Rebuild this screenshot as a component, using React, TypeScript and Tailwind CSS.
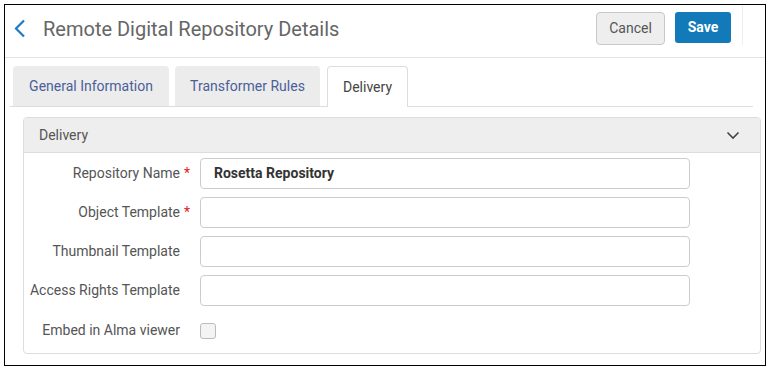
import React from "react";

const fields = [
  { label: "Repository Name", required: true, value: "Rosetta Repository" },
  { label: "Object Template", required: true, value: "" },
  { label: "Thumbnail Template", required: false, value: "" },
  { label: "Access Rights Template", required: false, value: "" },
];

const App = () => {
  return (
    <div className="w-[771px] h-[372px] bg-white pt-[4px] pl-[4px] pr-[5px] pb-[6px] font-['Roboto',sans-serif]">
      <div className="h-full border border-black flex flex-col">
        {/* header */}
        <div className="h-[53px] flex items-start border-b border-[#e2e2e2] shrink-0">
          <div className="flex items-center h-[33px] mt-[7px] pl-[9px]">
            <svg width="12" height="19" viewBox="0 0 12 19" className="mr-[17px]">
              <path d="M10 1.5 L2 9.5 L10 17.5" fill="none" stroke="#1f7bc1" strokeWidth="2.2" />
            </svg>
            <h1 className="text-[20px] text-[#666] leading-none">Remote Digital Repository Details</h1>
          </div>
          <div className="ml-auto flex items-start gap-[10px] mt-[7px]">
            <button className="h-[33px] w-[69px] rounded-[4px] border border-[#c8c8c8] bg-[#eeeeee] text-[14px] text-[#555]">
              Cancel
            </button>
            <button className="h-[31px] w-[56px] rounded-[3px] bg-[#137ab9] text-[14px] font-bold text-white">
              Save
            </button>
          </div>
          <div className="w-px h-[40px] bg-[#eeeeee] ml-[11px] mr-[22px]" />
        </div>

        {/* tabs */}
        <div className="mt-[8px] ml-[5px] mr-[12px] flex items-end gap-[6px] border-b border-[#dddddd] pl-[3px] h-[41px]">
          <div className="w-[156px] h-[40px] rounded-t-[4px] bg-[#ececec] flex items-center justify-center text-[14px] text-[#4a5f99]">
            General Information
          </div>
          <div className="w-[145px] h-[40px] rounded-t-[4px] bg-[#ececec] flex items-center justify-center text-[14px] text-[#4a5f99]">
            Transformer Rules
          </div>
          <div className="w-[81px] h-[41px] -mb-px ml-[1px] rounded-t-[4px] bg-white border border-b-0 border-[#dddddd] flex items-center justify-center text-[14px] text-[#444]">
            Delivery
          </div>
        </div>

        {/* panel */}
        <div className="mt-[10px] ml-[18px] mr-[4px] border border-[#dddddd] rounded-[4px] overflow-hidden">
          <div className="h-[35px] bg-[#eeeeee] border-b border-[#dddddd] flex items-center pl-[15px] pr-[20px] text-[14px] text-[#555]">
            <span>Delivery</span>
            <svg width="14" height="9" viewBox="0 0 14 9" className="ml-auto">
              <path d="M1.5 1.5 L7 7 L12.5 1.5" fill="none" stroke="#444" strokeWidth="1.6" />
            </svg>
          </div>
          <div className="pt-[5px] pb-[7px] flex flex-col gap-[8px]">
            {fields.map((f) => (
              <div key={f.label} className="flex items-center h-[31px]">
                <div className="w-[156px] text-right text-[14px] text-[#555] shrink-0">{f.label}</div>
                <div className="w-[20px] shrink-0 pl-[4px] text-[14px] text-[#e02020]">{f.required ? "*" : ""}</div>
                <div className="w-[490px] h-[31px] rounded-[4px] border border-[#cccccc] flex items-center px-[13px] text-[14px] font-bold text-[#333]">
                  {f.value}
                </div>
              </div>
            ))}
            <div className="flex items-center h-[31px] mt-[1px]">
              <div className="w-[156px] text-right text-[14px] text-[#555] shrink-0">Embed in Alma viewer</div>
              <div className="w-[20px] shrink-0" />
              <div className="w-[16px] h-[16px] rounded-[3px] border border-[#bbbbbb] bg-[#f4f4f4]" />
            </div>
          </div>
        </div>
      </div>
    </div>
  );
};

export default App;
